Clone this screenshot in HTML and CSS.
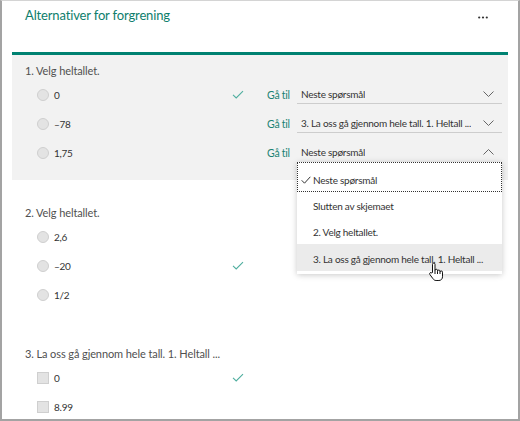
FILE: index.html
```html
<!DOCTYPE html>
<html lang="no">

<head>
    <meta charset="UTF-8">
    <title>Alternativer for forgrening</title>
    <link rel="stylesheet" href="styles.css">
</head>

<body>
    <div class="frame">
        <header class="head">
            <h1>Alternativer for forgrening</h1>
            <svg class="more" width="10" height="3" viewBox="0 0 10 3">
                <circle cx="1.2" cy="1.5" r="1.1" />
                <circle cx="5" cy="1.5" r="1.1" />
                <circle cx="8.8" cy="1.5" r="1.1" />
            </svg>
        </header>

        <!-- spørsmål 1 har forgrening slått på -->
        <section class="question active">
            <p class="q-title">1. Velg heltallet.</p>
            <div class="option">
                <span class="radio"></span>
                <span class="label">0</span>
                <svg class="check" width="12" height="9" viewBox="0 0 12 9"><path d="M1 4.8l3.2 3.2L11 1.2" /></svg>
                <span class="goto">Gå til</span>
                <div class="select">
                    <span class="value">Neste spørsmål</span>
                    <svg class="chev" width="11" height="6" viewBox="0 0 11 6"><path d="M.5.5l5 5 5-5" /></svg>
                </div>
            </div>
            <div class="option">
                <span class="radio"></span>
                <span class="label">–78</span>
                <span class="check"></span>
                <span class="goto">Gå til</span>
                <div class="select">
                    <span class="value">3. La oss gå gjennom hele tall. 1. Heltall ...</span>
                    <svg class="chev" width="11" height="6" viewBox="0 0 11 6"><path d="M.5.5l5 5 5-5" /></svg>
                </div>
            </div>
            <div class="option">
                <span class="radio"></span>
                <span class="label">1,75</span>
                <span class="check"></span>
                <span class="goto">Gå til</span>
                <div class="select open">
                    <span class="value">Neste spørsmål</span>
                    <svg class="chev" width="11" height="6" viewBox="0 0 11 6"><path d="M.5 5.5l5-5 5 5" /></svg>
                    <ul class="menu">
                        <li class="item focused">
                            <svg class="item-check" width="10" height="8" viewBox="0 0 10 8"><path d="M.7 4.3l2.8 2.9L9.3.8" /></svg>
                            Neste spørsmål
                        </li>
                        <li class="item">Slutten av skjemaet</li>
                        <li class="item">2. Velg heltallet.</li>
                        <li class="item hover">3. La oss gå gjennom hele tall. 1. Heltall ...</li>
                        <svg class="pointer" width="16" height="20" viewBox="0 0 16 20">
                            <path d="M4.5 10.5V2.3a1.25 1.25 0 0 1 2.5 0V8.5a1.25 1.25 0 0 1 2.5 0v.8a1.25 1.25 0 0 1 2.5 0v.9a1.25 1.25 0 0 1 2.5 0v4.6c0 2.1-1.5 3.7-3.6 3.7H8.1c-1.4 0-2.4-.7-3.2-1.9L1.9 12.5a1.2 1.2 0 0 1 1.9-1.5z" />
                            <path d="M7 8.5v3.5M9.5 9.3v2.7M12 10.2v1.8" />
                        </svg>
                    </ul>
                </div>
            </div>
        </section>

        <section class="question">
            <p class="q-title">2. Velg heltallet.</p>
            <div class="option">
                <span class="radio"></span>
                <span class="label">2,6</span>
            </div>
            <div class="option">
                <span class="radio"></span>
                <span class="label">–20</span>
                <svg class="check" width="12" height="9" viewBox="0 0 12 9"><path d="M1 4.8l3.2 3.2L11 1.2" /></svg>
            </div>
            <div class="option">
                <span class="radio"></span>
                <span class="label">1/2</span>
            </div>
        </section>

        <section class="question">
            <p class="q-title">3. La oss gå gjennom hele tall. 1. Heltall ...</p>
            <div class="option">
                <span class="box"></span>
                <span class="label">0</span>
                <svg class="check" width="12" height="9" viewBox="0 0 12 9"><path d="M1 4.8l3.2 3.2L11 1.2" /></svg>
            </div>
            <div class="option">
                <span class="box"></span>
                <span class="label">8.99</span>
            </div>
        </section>
    </div>
</body>

</html>
```

FILE: styles.css
```css
body {
    margin: 0;
    font-family: Lato, "Noto Sans", sans-serif;
    color: #404040;
    background: #fff;
}

.frame {
    width: 520px;
    height: 421px;
    box-sizing: border-box;
    border: 2px solid #a3a3a3;
    border-top: 1px solid #d4d4d4;
    overflow: hidden;
}

.head {
    height: 51px;
    box-sizing: border-box;
    padding: 4px 30px 0 23px;
    display: flex;
    justify-content: space-between;
    align-items: flex-start;
}

.head h1 {
    margin: 0;
    font-size: 13px;
    letter-spacing: -0.15px;
    line-height: 20px;
    font-weight: normal;
    color: #0e7e6c;
}

.more {
    margin-top: 11px;
    fill: #333;
}

.question {
    margin: 0 10px;
    padding: 24px 6px 12px 13px;
}

.question.active {
    border-top: 3px solid #008272;
    background: #f2f2f2;
    padding-top: 7px;
    padding-bottom: 13px;
}

.q-title {
    margin: 0 0 1px;
    font-size: 11px;
    letter-spacing: -0.1px;
    line-height: 17px;
    color: #505050;
}

.option {
    display: flex;
    align-items: center;
    height: 29px;
    margin-left: 12px;
    font-size: 10px;
    letter-spacing: -0.25px;
}

.radio,
.box {
    width: 12px;
    height: 12px;
    box-sizing: border-box;
    background: #e3e3e3;
    border: 1px solid #cfcfcf;
    border-radius: 50%;
    margin-right: 5px;
    flex: none;
}

.box {
    border-radius: 0;
}

.label {
    width: 178px;
    flex: none;
    color: #333;
}

.check {
    width: 12px;
    flex: none;
    fill: none;
    stroke: #4fae9f;
    stroke-width: 1.1;
}

.goto {
    margin-left: 23px;
    width: 30px;
    flex: none;
    font-size: 10.5px;
    color: #1a8272;
}

.select {
    flex: 1;
    min-width: 0;
    position: relative;
    height: 18px;
    padding: 0 8px 0 4px;
    display: flex;
    align-items: center;
    justify-content: space-between;
    border-bottom: 1px solid #cdcdcd;
    color: #333;
}

.select.open {
    border-bottom-color: transparent;
}

.value {
    white-space: nowrap;
    overflow: hidden;
}

.chev {
    flex: none;
    fill: none;
    stroke: #666;
    stroke-width: 1;
}

.menu {
    position: absolute;
    top: calc(100% + 1px);
    left: 0;
    right: 0;
    margin: 0;
    padding: 0 0 3px;
    list-style: none;
    background: #fff;
    box-shadow: 0 1px 6px rgba(0, 0, 0, 0.22);
    z-index: 2;
}

.item {
    position: relative;
    height: 26px;
    padding: 2px 0 0 16px;
    display: flex;
    align-items: center;
    box-sizing: border-box;
    white-space: nowrap;
    overflow: hidden;
}

.item.focused {
    height: 30px;
    padding-top: 6px;
    outline: 1px dotted #333;
    outline-offset: -1px;
}

.item.hover {
    height: 27px;
    background: #ebebeb;
}

.item-check {
    position: absolute;
    left: 4px;
    top: 14px;
    fill: none;
    stroke: #333;
    stroke-width: 1;
}

.pointer {
    position: absolute;
    left: 131px;
    top: 100px;
    fill: #fff;
    stroke: #111;
    stroke-width: 1;
}

.pointer path + path {
    fill: none;
}
```
